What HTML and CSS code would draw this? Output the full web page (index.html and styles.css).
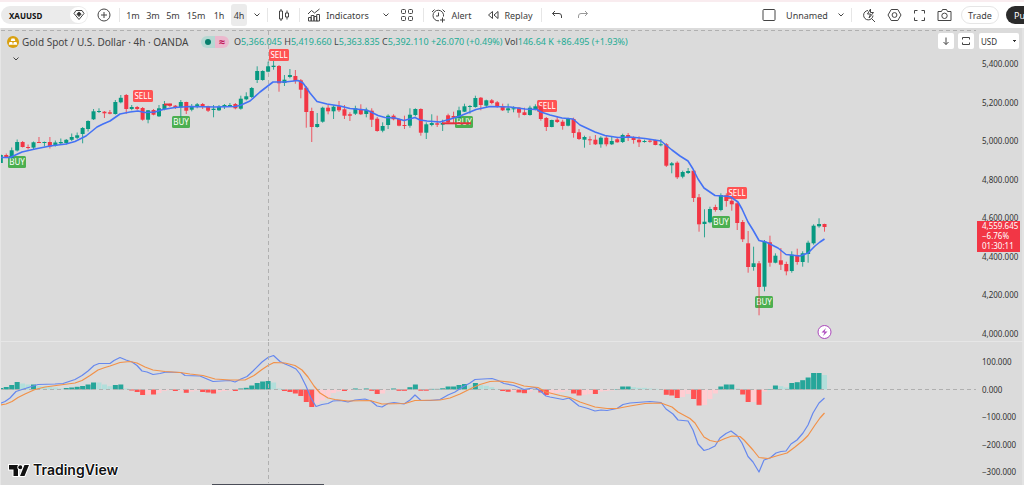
FILE: index.html
```html
<!DOCTYPE html>
<html lang="en">
<head>
<meta charset="utf-8">
<title>XAUUSD 4h chart</title>
<link rel="stylesheet" href="styles.css">
</head>
<body>
<header class="toolbar">
  <div class="symbol">
    <button class="symbol-name">XAUUSD</button>
    <button class="symbol-flag" aria-label="Watchlist"><svg class="icon" width="12" height="12" viewBox="0 0 12 12"><path d="M3 1.500h6l2 3L6 10.500 1 4.500z"/><path class="solid" d="M6 3l2.200 2L6 7.500 3.800 5z"/></svg></button>
  </div>
  <button class="tool add" aria-label="Compare"><svg class="icon" width="14" height="14" viewBox="0 0 14 14"><circle cx="7" cy="7" r="6"/><path d="M7 4v6M4 7h6"/></svg></button>
  <i class="sep"></i>
  <nav class="intervals">
    <button>1m</button><button>3m</button><button>5m</button><button class="wide">15m</button><button>1h</button><button class="active">4h</button>
  </nav>
  <button class="tool chev" aria-label="More intervals"><svg class="icon" width="8" height="6" viewBox="0 0 8 6"><path d="M1.500 1.500L4 4l2.500-2.500"/></svg></button>
  <i class="sep"></i>
  <button class="tool candle" aria-label="Chart type"><svg class="icon" width="12" height="14" viewBox="0 0 12 14"><path d="M1.500 3h3v8h-3zM3 1v2M3 11v2M7.500 5h3v4h-3zM9 2.500V5M9 9v2.500"/></svg></button>
  <i class="sep"></i>
  <button class="tool indicators"><svg class="icon" width="14" height="14" viewBox="0 0 14 14"><path d="M1.500 13V9.500h2.700V13M4.200 13V7.500H7V13M7 13V8.500h2.700V13M9.700 13V6.500h2.800V13zM1.500 13h9M1 6l3.500-3.500L7.500 5 12.500 1"/></svg><span>Indicators</span></button>
  <button class="tool chev" aria-label="Favorite indicators"><svg class="icon" width="8" height="6" viewBox="0 0 8 6"><path d="M1.500 1.500L4 4l2.500-2.500"/></svg></button>
  <button class="tool layouts" aria-label="Templates"><svg class="icon" width="14" height="14" viewBox="0 0 14 14"><rect x="1.500" y="1.500" width="4" height="4" rx="1"/><rect x="8.500" y="1.500" width="4" height="4" rx="1"/><rect x="1.500" y="8.500" width="4" height="4" rx="1"/><rect x="8.500" y="8.500" width="4" height="4" rx="1"/></svg></button>
  <i class="sep"></i>
  <button class="tool alert"><svg class="icon" width="15" height="15" viewBox="0 0 15 15"><path d="M12.500 8.500A5.300 5.300 0 1 0 8 12.800M7.500 4.500v3.500H5M1 4l2.500-2.500M11.500 1.500L14 4M11.500 9.500v5M9 12h5"/></svg><span>Alert</span></button>
  <button class="tool replay"><svg class="icon" width="12" height="12" viewBox="0 0 12 12"><path d="M5.500 2.500v7L1.500 6zM11 2.500v7L7 6z"/></svg><span>Replay</span></button>
  <i class="sep"></i>
  <button class="tool undo" aria-label="Undo"><svg class="icon" width="12" height="10" viewBox="0 0 12 10"><path d="M4 1L1.500 3.500 4 6M1.500 3.500H8q2.500 0 2.500 2.500V8"/></svg></button>
  <button class="tool redo" aria-label="Redo" disabled><svg class="icon" width="12" height="10" viewBox="0 0 12 10"><path d="M8 1l2.500 2.500L8 6M10.500 3.500H4Q1.500 3.500 1.500 6V8"/></svg></button>
  <div class="right">
    <button class="tool square" aria-label="Layout"><svg class="icon" width="14" height="14" viewBox="0 0 14 14"><rect x="1" y="1.500" width="12" height="11" rx="1"/></svg></button>
    <button class="tool unnamed">Unnamed</button>
    <button class="tool chev" aria-label="Manage layouts"><svg class="icon" width="8" height="6" viewBox="0 0 8 6"><path d="M1.500 1.500L4 4l2.500-2.500"/></svg></button>
    <i class="sep"></i>
    <div class="icons">
      <button class="tool" aria-label="Quick search"><svg class="icon" width="14" height="15" viewBox="0 0 14 15"><path d="M6 2.500a4.700 4.700 0 1 0 5 5M9.500 10.500l3.500 3.500M8.500 1L5.500 6h3L7 10l4.500-5.500h-3z"/></svg></button>
      <button class="tool" aria-label="Settings"><svg class="icon" width="15" height="14" viewBox="0 0 15 14"><path d="M4.200 1.500h6.600L14 7l-3.200 5.500H4.200L1 7z"/><circle cx="7.500" cy="7" r="2.400"/></svg></button>
      <button class="tool" aria-label="Fullscreen"><svg class="icon" width="13" height="13" viewBox="0 0 13 13"><path d="M1.500 4.500v-3h3M8.500 1.500h3v3M11.500 8.500v3h-3M4.500 11.500h-3v-3"/></svg></button>
      <button class="tool" aria-label="Snapshot"><svg class="icon" width="15" height="14" viewBox="0 0 15 14"><path d="M1 3.500h3.500l1-2h4l1 2H14v9H1z"/><circle cx="7.500" cy="7.800" r="2.700"/></svg></button>
    </div>
    <button class="trade">Trade</button>
    <button class="publish">Publish</button>
  </div>
</header>
<main class="chart">
  <section class="pane price">
    <svg id="price" class="plot price-plot" role="img" aria-label="Price candles"></svg>
    <div class="legend">
      <div class="legend-row">
        <svg width="12" height="12" viewBox="0 0 12 12"><circle cx="6" cy="6" r="6" fill="#d9a010"/><path fill="#fff" d="M4.500 2.500h3l.8 2.500H3.700zM2.500 6h2.700L6 8.800H1.700zM6.800 6h2.700l.8 2.800H6z"/></svg>
        <h1>Gold Spot / U.S. Dollar · 4h · OANDA</h1>
        <span class="status"><i class="dot"></i><i class="approx">≈</i></span>
        <p class="ohlc"><b>O</b>5,366.045 <b>H</b>5,419.660 <b>L</b>5,363.835 <b>C</b>5,392.110 +26.070 (+0.49%) <b>Vol</b>146.64 K +86.495 (+1.93%)</p>
      </div>
      <button class="collapse" aria-label="Collapse"><svg class="icon" width="8" height="6" viewBox="0 0 8 6"><path d="M1.500 1.500L4 4l2.500-2.500"/></svg></button>
    </div>
    <div class="pane-tools">
      <button aria-label="Move pane down"><svg class="icon" width="10" height="10" viewBox="0 0 10 10"><path d="M5 1.500v7M2.500 6L5 8.500 7.500 6"/></svg></button>
      <button aria-label="Maximize pane"><svg class="icon" width="10" height="10" viewBox="0 0 10 10"><path d="M1.500 3.500v-2h7v2M1.500 6.500v2h7v-2"/></svg></button>
    </div>
  </section>
  <aside class="axis price-axis">
    <select class="currency" aria-label="Currency"><option>USD</option></select>
    <ul class="ticks"><li>5,400.000</li><li>5,200.000</li><li>5,000.000</li><li>4,800.000</li><li>4,600.000</li><li>4,400.000</li><li>4,200.000</li><li>4,000.000</li></ul>
    <div class="last"><span>4,559.645</span><span>−6.76%</span><span>01:30:11</span></div>
  </aside>
  <section class="pane macd">
    <svg id="macd" class="plot macd-plot" role="img" aria-label="MACD"></svg>
    <a class="brand" href="#">
      <svg width="22" height="13" viewBox="0 0 22 13"><path class="mark" d="M1 1h9v11H5.500V5.500H1z"/><circle class="mark" cx="12.300" cy="3.200" r="2"/><path class="mark" d="M16.500 1H21l-4.500 11H12z"/></svg>
      <span>TradingView</span>
    </a>
  </section>
  <aside class="axis macd-axis">
    <ul class="ticks"><li>100.000</li><li>0.000</li><li>−100.000</li><li>−200.000</li><li>−300.000</li></ul>
  </aside>
  <i class="handle"></i>
</main>
<script src="chart.js"></script>
</body>
</html>
```

FILE: styles.css
```css
* { box-sizing: border-box; }
body {
  margin: 0;
  overflow: hidden;
  background: #dbdbdb;
  color: #3c3c3c;
  font-family: "Noto Sans", "Open Sans", sans-serif;
  font-size: 9px;
}
button {
  display: flex;
  align-items: center;
  justify-content: center;
  padding: 0;
  border: 0;
  background: none;
  color: inherit;
  font: inherit;
  white-space: nowrap;
}
ul, p, h1 { margin: 0; padding: 0; list-style: none; }
.icon { flex: none; fill: none; stroke: #444; stroke-width: 1; }
.icon .solid { fill: #333; }

.toolbar {
  display: flex;
  align-items: center;
  height: 28px;
  padding-left: 1px;
  border-top: 2px solid #f9ecef;
  background: #fff;
}
.symbol {
  display: flex;
  align-items: center;
  justify-content: space-between;
  width: 87px;
  height: 18px;
  padding: 0 1px 0 8px;
  border-radius: 9px;
  background: #ebebeb;
}
.symbol-name { color: #111; font-weight: 700; font-size: 8px; }
.symbol-flag { width: 17px; height: 16px; border-radius: 8px; background: #fff; }
.tool { flex: none; gap: 5px; height: 22px; }
.sep { flex: none; width: 1px; height: 14px; background: #e6e6e6; }
.add { width: 31px; }
.intervals { display: flex; gap: 4px; margin-left: 5px; }
.intervals button { width: 16px; height: 22px; border-radius: 3px; }
.intervals .wide { width: 22px; }
.intervals .active { background: #ebebeb; }
.chev { width: 20px; }
.candle { width: 31px; }
.indicators { width: 76px; }
.layouts { width: 22px; margin-right: 5px; }
.alert { width: 55px; }
.replay { width: 62px; }
.undo { width: 30px; }
.redo { width: 22px; }
.redo .icon { stroke: #999; }
.right { display: flex; align-items: center; margin-left: auto; }
.square { width: 20px; }
.unnamed { width: 52px; padding-left: 4px; }
.icons { display: flex; gap: 11px; padding: 0 9px 0 10px; }
.trade, .publish { height: 18px; border-radius: 9px; }
.trade { width: 38px; border: 1px solid #e6e6e6; }
.publish { width: 55px; margin: 0 -37px 0 7px; padding-left: 8px; justify-content: flex-start; background: #2b2b2b; color: #fff; }

.chart {
  position: relative;
  display: grid;
  grid-template-columns: minmax(0, 1fr) 48px;
  border-left: 1px solid #e6e6e6;
}
.pane { position: relative; }
.plot { display: block; width: 100%; }
.price-plot { height: 313px; }
.macd-plot { height: 143px; }
.price, .price-axis { border-bottom: 1px solid #e6e6e6; }
.legend { position: absolute; top: 7px; left: 6px; }
.legend-row { display: flex; align-items: center; gap: 3px; height: 13px; white-space: nowrap; }
h1 { width: 174px; color: #444; font-size: 10px; font-weight: 400; }
.status { display: flex; margin-left: 2px; width: 28px; height: 12px; border-radius: 6px; }
.status i { flex: 1; display: flex; align-items: center; justify-content: center; font-style: normal; }
.dot { border-radius: 6px 0 0 6px; background: #b5d8d2; }
.dot::before { content: ""; width: 6px; height: 6px; border-radius: 3px; background: #087f6c; }
.approx { border-radius: 0 6px 6px 0; background: #ebb8cd; color: #c2185b; font-size: 11px; font-weight: 700; line-height: 12px; }
.ohlc { margin-left: 2px; color: #22ab94; }
.ohlc b { color: #444; font-weight: 400; }
.collapse { width: 8px; height: 6px; margin: 8px 0 0 5px; }
.pane-tools { position: absolute; top: 5px; right: 2px; display: flex; gap: 4px; }
.pane-tools button { width: 16px; height: 16px; border-radius: 2px; background: #fff; }

.axis { position: relative; border-right: 2px solid #e3e3e3; color: #333; font-size: 8px; line-height: 12px; }
.ticks { display: flex; flex-direction: column; justify-content: space-between; padding-left: 6px; }
.price-axis { padding: 5px 0 1px; }
.price-axis .ticks { height: 282px; margin-top: 9px; }
.currency {
  display: block;
  width: 40px;
  height: 16px;
  margin-left: 3px;
  padding: 0 0 0 2px;
  appearance: none;
  border: 0;
  border-radius: 2px;
  background: linear-gradient(45deg, transparent 50%, #333 50%) 34px 7px / 2px 2px no-repeat, linear-gradient(-45deg, transparent 50%, #333 50%) 36px 7px / 2px 2px no-repeat, #fff;
  color: #333;
  font: 8px "Noto Sans", sans-serif;
}
.last {
  position: absolute;
  top: 193px;
  left: 1px;
  display: flex;
  flex-direction: column;
  width: 43px;
  height: 31px;
  padding-left: 5px;
  background: #f23645;
  color: #fff;
  line-height: 10px;
}
.macd-axis .ticks { height: 122px; margin-top: 14px; }
.brand {
  position: absolute;
  bottom: 4px;
  left: 7px;
  display: flex;
  align-items: center;
  gap: 3px;
  color: #111;
  font: 600 14px/22px Inter, sans-serif;
  text-decoration: none;
  text-shadow: 1px 0 #fff, -1px 0 #fff, 0 1px #fff, 0 -1px #fff;
}
.mark { fill: #111; stroke: #fff; stroke-width: 2; paint-order: stroke; }
.handle { position: absolute; bottom: 0; left: 211px; width: 112px; height: 1px; background: #4a4d57; }

.dash { stroke: #b0b0b0; stroke-dasharray: 4 3; }
.up { fill: #089981; stroke: #089981; }
.down { fill: #f23645; stroke: #f23645; }
.candle-wick { stroke-width: 1; opacity: .8; }
.candle-body { stroke: none; }
.average, .line { fill: none; stroke-linejoin: round; }
.average { stroke: #4472f5; stroke-width: 1.6; }
.line { stroke-width: 1.2; }
.line.fast { stroke: #6688ee; }
.line.slow { stroke: #f29148; }
.level { stroke: #e82e3c; stroke-width: 2; }
.tag-sell { fill: #ff5252; }
.tag-buy { fill: #4caf50; }
.tag-text { fill: #fff; font-size: 8px; text-anchor: middle; }
.bar-T { fill: #26a69a; }
.bar-t { fill: #b2dfdb; }
.bar-R { fill: #ff5252; }
.bar-r { fill: #ffcdd2; }
.bolt-ring { fill: #fff; stroke: #ab47bc; }
.bolt { fill: #ab47bc; }
```

FILE: chart.js
```javascript
const NS = "http://www.w3.org/2000/svg";
const STEP = 5.455;
const FIRST = -0.2;
const xAt = i => FIRST + i * STEP;

function add(parent, tag, attrs, text) {
  const el = document.createElementNS(NS, tag);
  for (const key in attrs) el.setAttribute(key, attrs[key]);
  if (text) el.textContent = text;
  parent.appendChild(el);
  return el;
}

// direction, high, body top, body bottom, low
const candles = `G 154 155 163 163|R 153.5 155 157.5 158|G 147.5 150.3 158.3 159|G 139.5 142 150.5 151.5|R 141 142 147 147.5|R 144.5 147 148 149.5|G 141.5 142.3 147.6 149|R 137 142 142.8 143|G 141.6 142 142.8 146.5|R 137 142 146.5 148.5
G 140.5 142.5 145.5 146.5|G 138.5 142 143.3 144.5|G 139 139.8 143 144.5|G 133.5 137 139.8 141|G 132.5 135.3 137.8 139|G 127 128 134 143.3|G 120.3 121 129 131.5|G 109 111.3 119.3 120|G 108.3 111 112 113|R 111 111.7 113.3 118
R 110 112.3 113.7 114.3|G 100 102 114 114.6|G 95 97.8 102.3 103.3|R 94 95 109 113.7|G 105 107 109 110.3|R 106 107 109 110.3|R 107 108 119.7 120.7|G 110 110.3 119.7 123.3|R 109 110 114.7 115.3|G 105 108.3 116.3 117
G 101 104 109 110.3|R 103.5 104 105.7 107|R 105 105.7 107 109|G 100 102 107.3 117.3|R 101.7 102 110.7 114|G 104 106.3 109.7 111.3|G 103 104.3 107 108.3|R 103 104 106.7 109|R 105.7 106.3 110.7 112|G 105 108.7 110 117.3
G 105 106.7 110.3 111|G 104 105 107 109|G 103 105 106.3 107|R 103 104 108.3 109.3|G 95.7 98.7 108.7 109.7|G 92.3 96.3 99.3 100.3|G 87 88 97 98|G 66.3 71 80 83|G 70.3 71 80 80.7|G 61.7 66.3 71.7 72.3
G 61 65.7 67 69.7|R 65 66 83.3 91.7|G 75 79.7 83 86|G 69 75 77 78.3|R 70 76 81 83.7|R 79 80.3 89.7 98.3|R 86 87.7 112 127.7|R 107.7 111 127 142|G 113 124 127 127.7|G 106.7 107.7 121.7 122.7
R 105 107.7 111.3 114.3|G 105.3 106.7 111.3 119|R 101 106.3 110.3 112|R 105 109.3 115.7 119|R 112.3 114.3 115.7 121|G 105.7 108.3 113.7 115|R 104.3 109.3 114.3 115|G 107.7 109.7 114 117.3|R 108.3 110.7 119.7 127|R 117 118.7 131 131.7
G 122.3 126 130.7 132.3|G 114.3 115.7 125 129|R 114.3 115.7 119.3 120.3|R 118.3 119 125.7 126.3|R 115.7 125 126 129|G 108.3 114.7 125.7 127.7|G 108.3 109 115 116.3|R 108.3 109 132.7 135.7|G 122.3 124.3 132.7 139|G 114.3 123 125 126.3
R 115.7 123.3 124.7 127|G 119.7 123 124.7 131|R 113.7 115.3 122.3 123.3|R 111.7 116 117.7 123.7|G 106.7 110.3 118.3 119|G 103.7 106.3 111.7 112|G 105 106 107 113.7|G 95.7 98 107 107.7|R 97 97.7 105 110.3|G 99.7 100.3 105.7 107.7
R 99 100.3 103 104.3|R 101 102.3 107 107.7|R 103.7 106.3 110.3 111|G 103.7 108.3 110.3 113|G 106.3 108.3 109.3 112.3|R 107 107.7 112.7 117.7|R 107.7 112.3 115 115.3|G 105.7 107.7 115 115.7|G 104.3 106.3 109 110.3|R 105.7 106.3 119 120.7
R 117 118 127 131|G 119.7 120 127 127.3|R 116.3 119.7 122 123|R 119.7 121.7 126 129.7|G 117.7 118.3 125.7 126.3|R 117.7 119 133 137.7|R 129 132.3 139 140|G 135.7 137 139.7 147.7|R 136.3 139.3 140.3 145|R 135 139.7 144.3 145
G 136.3 137.7 144.3 147.7|R 135 137.7 144.3 146.3|G 137 141 144.3 145|R 137.7 139.3 142.3 142.7|G 133.7 135 142 143|R 133 135 137.7 141|R 136.3 137 140 143.7|R 136.3 139.7 142.3 147|G 139.7 141 142 142.7|R 139.7 140.7 141.7 142.7
R 139.7 140 145 145.3|G 139 144.3 145.1 146.3|R 143 144.3 165.7 167|G 162 163.3 165.3 173.3|R 161.3 162.7 177.3 179|G 170.7 172 176.7 178.3|G 168 171 173 174|R 170 170.7 198 202|R 194 197.3 224.3 231.7|G 209.3 221.7 224 237.3
G 206.7 209 222.3 223.3|R 204.7 207 210 211.7|G 193.3 195 210 211.3|R 193.3 195.3 201 206.7|R 198 200.7 204.3 210.7|R 202 203.3 223 230|R 220 222 239.3 242|R 231 243.3 267 272.7|G 246.7 263.3 267 270.7|R 261 263.3 287 315.3
G 240 242 286.7 291.3|R 235.7 242.3 262.7 266.7|G 253.3 255.7 262.7 263.3|R 248 260.3 264.7 270|R 261.7 264 271.3 275.3|G 251.3 254.7 271 272.7|R 248.7 255.3 262 264.7|G 251.3 253.3 262 266.7|G 240.7 242.7 254 262.7|G 224.3 225.7 243.3 244.7
G 218.3 224 226.3 227.7|R 223.7 224 227 231.7`.split(/[|\n]/).map(row => row.split(" "));

const average = "0,157.5 10,157.5 22,152 35,149 50,146 66,144 75,141.5 86,136 97,127 103,124 110,121 120,114 130,112 138,111 145,112.5 155,112 163,109.5 175,107.5 190,106.5 215,107 235,106.5 240,105.5 250,101 260,92 273,82 285,82 298,80.500 303,83 310,93 317,101.5 327,104 340,106 350,108.5 366,110 370,111.5 378,115.5 385,117.5 395,118 404,120.5 415,117.5 420,120 427,121 440,122 449,119.5 460,116 470,112 476,109.5 490,106.5 510,107 525,109 537,109.5 541,112 550,115 562,118 573,119 580,125 595,132 605,135.5 618,137.5 630,137 645,138.5 661,141 672,150 680,156 688,161 693,169 698,179 704,188 715,195.5 730,196.5 738,202 742,209 748,222 753,230 759,240.5 766,242 778,248 786,254.5 800,256 808,253 815,246 820,242 824.5,239";

// label, left, top
const tags = [["BUY", 8, 156], ["SELL", 133, 90], ["BUY", 172, 116], ["SELL", 269, 49], ["BUY", 455, 116], ["SELL", 537, 100], ["SELL", 727, 187], ["BUY", 712, 216], ["BUY", 755, 296]];

// histogram: T/t rising or fading above zero, R/r below
const bars = "T1.5 T2.5 T4.5 T7.5 t6 t5 T5 t3.5 t3 t3 t2 t1 T1.5 T2 T2.7 T3.5 T5 T7 t7 t5 t3.3 T4.5 T5 t1 R1 R2.5 R5.5 r5 R5 r3.5 r1.3 r.7 R1.5 r1 R3.3 r2 r1 R2.5 R3 R4 r2.5 r1.5 r1 R1.5 T1 T1.7 T4 T6.5 T8 T8.5 t7 t1 R1.5 R2.5 R4 R6.5 R12.5 R17.5 r14 r11 r7.5 r3.5 r2 R1.5 r1 T1 r.5 T1 R1.3 R4.5 r4 r.7 T1 R1.3 R1.3 T2.3 T5 R1.2 R1.2 T.6 T.6 T1.2 T3 T3 T4.5 T5.5 t4 T6.5 t4.5 t3.7 t2.3 t.6 R1.5 R2.3 r1.5 R3 R3.7 r2 T.5 R3 R5.5 r5 r3.5 r2.5 r1 R4 R6 r5.3 r4.7 R4.5 r2 r1.5 r1 T.5 T3 T3 t2.3 t1.7 t1.7 t1 t.7 t.5 R5.3 R6 R8.5 r7.5 r4.5 R9.5 R16 r15.5 r9.5 r4 T3 T5 T5 t1 R5 R12.5 r12.5 R15.3 r2 T.5 T4 t3.3 t2 T6.5 T7.3 T9.3 T12 T16.5 T16.5 t14.5".split(" ");

const fast = "0,403.5 5,401.5 10,398 16,391.5 22,389.5 30,387 38,384.5 55,384 63,383.5 75,379.5 82,375.5 88,371 94,365.5 99,363.5 110,363.5 114,360.5 120,357.5 126,360 132,362 137,365.5 142,371 147,372 153,374.5 160,373.5 166,372 181,372.5 185,375.5 200,376 207,379 213,381.5 230,380.5 235,382 241,379 247,376.5 253,371 262,362 268,357.5 273.5,355.5 280,361.5 285,364 290,366 296,369 300,374 306,386 311,398 316,406.5 322,404.5 328,403.5 333,401 340,400.5 348,402 355,400 365,399 371,401 377,406 382,407 388,403.5 394,402.5 404,404 410,400 415,395 421,400.5 430,400.5 440,399.5 448,395 455,392 461,388 470,383 475,379.5 483,379 492,378.5 498,380.5 504,383.5 514,385.5 524,389.5 535,387.5 541,391.5 546,396 550,397 563,399.5 569,398 574,402 579,406 588,408.5 595,411 601,410 607,410.5 617,408.5 623,404.5 630,403 650,401.5 661,402.5 666,409 673,414 678,420 688,421 693,430 698,444 704,450.5 709,449 715,446 720,438 726,433.5 731,431 737,435.5 742,443 748,456.5 753,462 759,472 764,460 770,458 776,453 781,451.5 786,451 791,444 797,440 803,433 808,425 813,413 819,403 824.5,398";
const slow = "0,405 6,404 12,401.5 18,397.5 25,394 35,389.5 45,387 60,385 75,383 82,380.5 90,375.5 98,370 105,367.5 110,366 120,362.5 130,361.5 137,363 145,367 153,370 165,371.5 180,372.5 190,374 203,375.5 215,379 230,380 245,380 254,375.5 262,369.5 268,365.5 274,362.5 285,363 295,365.5 302,370 308,377 314,386 320,393 328,398 335,399.5 348,401 370,400.5 382,404 405,403.5 415,400.5 440,400 450,398 460,394 472,388 480,384.5 490,381.5 500,381 513,382.5 524,386 538,387.5 546,392 560,395.5 570,397.5 580,402 595,407 607,408.5 617,408.5 630,406 645,403.5 661,403 672,407 678,412 690,418.5 695,423 700,431 704,437 710,440.5 717,442 725,438.5 732,436 740,436.5 744,440 753,450 759,457.5 768,458.5 778,455.5 787,453 795,447 803,440.5 808,435.5 815,425 820,418 824.5,413";

const price = document.getElementById("price");
add(price, "line", { class: "dash", x1: 0, y1: 2.5, x2: "100%", y2: 2.5 });
add(price, "line", { class: "dash", x1: 267.5, y1: 3, x2: 267.5, y2: 313 });
const plot = add(price, "g", { transform: "translate(0 -28)" });
for (const [label, x, y] of tags) {
  const sell = label === "SELL";
  const w = sell ? 20 : 18;
  const cx = x - 1 + w / 2;
  add(plot, "rect", { class: sell ? "tag-sell" : "tag-buy", x: x - 1, y, width: w, height: 12, rx: 1.5 });
  add(plot, "text", { class: "tag-text", x: cx, y: y + 9 }, label);
}
candles.forEach(([dir, high, top, bottom, low], i) => {
  const x = xAt(i);
  const g = add(plot, "g", { class: dir === "G" ? "up" : "down" });
  add(g, "line", { class: "candle-wick", x1: x, y1: high, x2: x, y2: low });
  add(g, "rect", { class: "candle-body", x: x - 2, y: top, width: 4, height: Math.max(1, bottom - top) });
});
add(plot, "line", { class: "level", x1: 441, y1: 123.3, x2: 470, y2: 123.3 });
add(plot, "line", { class: "level", x1: 163, y1: 104.5, x2: 171, y2: 104.5 });
add(plot, "polyline", { class: "average", points: average, transform: "translate(-1 0)" });
add(plot, "circle", { class: "bolt-ring", cx: 823.5, cy: 332, r: 6.5 });
add(plot, "path", { class: "bolt", d: "M825 328l-4.500 4.500h3l-1.500 3.500 4.500-4.500h-3z" });

const macd = document.getElementById("macd");
const lower = add(macd, "g", { transform: "translate(0 -342)" });
bars.forEach((bar, i) => {
  const h = Number(bar.slice(1));
  const above = /t/i.test(bar[0]);
  add(lower, "rect", { class: "bar-" + bar[0], x: xAt(i) - 2.5, y: above ? 389.5 - h : 389.5, width: 5, height: h });
});
add(lower, "line", { class: "dash", x1: 0, y1: 389.5, x2: "100%", y2: 389.5 });
add(lower, "polyline", { class: "line fast", points: fast, transform: "translate(-1 0)" });
add(lower, "polyline", { class: "line slow", points: slow, transform: "translate(-1 0)" });
add(macd, "line", { class: "dash", x1: 267.5, y1: 0, x2: 267.5, y2: 141 });
```
